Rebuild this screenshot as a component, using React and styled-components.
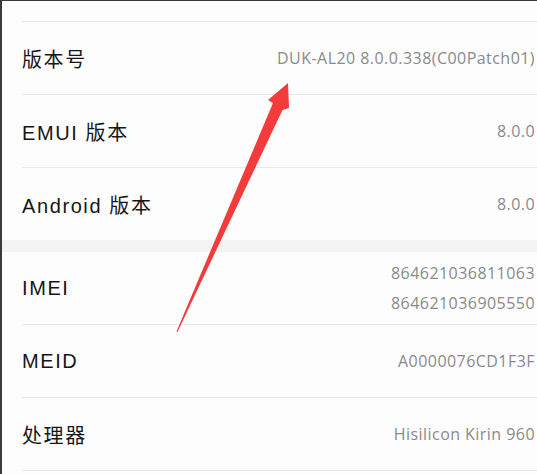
import React from 'react';
import styled, { createGlobalStyle } from 'styled-components';

const GlobalStyle = createGlobalStyle`
  html, body {
    margin: 0;
    padding: 0;
    background: #fdfdfd;
  }
  * {
    box-sizing: border-box;
  }
`;

const groups = [
  [
    { label: '版本号', values: ['DUK-AL20 8.0.0.338(C00Patch01)'] },
    { label: 'EMUI 版本', values: ['8.0.0'] },
    { label: 'Android 版本', values: ['8.0.0'] },
  ],
  [
    { label: 'IMEI', values: ['864621036811063', '864621036905550'] },
    { label: 'MEID', values: ['A0000076CD1F3F'] },
    { label: '处理器', values: ['Hisilicon Kirin 960'], divider: true },
  ],
];

const Screen = styled.div`
  position: relative;
  width: 537px;
  height: 474px;
  overflow: hidden;
  background: #fdfdfd;
  border-top: 1px solid #3a3a3a;
  border-left: 2px solid #3a3a3a;
  font-family: 'Liberation Sans', 'Noto Sans CJK SC', sans-serif;
`;

const TopSpacer = styled.div`
  height: 21px;
  margin-left: 20px;
  border-bottom: 1px solid #e9e9e9;
`;

const Group = styled.div`
  display: flex;
  flex-direction: column;
`;

const Row = styled.div`
  display: flex;
  align-items: center;
  justify-content: space-between;
  height: ${({ $last }) => ($last ? '72px' : '73px')};
  margin-left: 20px;
  padding-right: 2px;
  border-bottom: ${({ $last }) => ($last ? 'none' : '1px solid #e9e9e9')};
`;

const Label = styled.div`
  font-size: 20px;
  color: #161616;
  letter-spacing: 1.6px;
  white-space: nowrap;
`;

const Values = styled.div`
  display: flex;
  flex-direction: column;
  align-items: flex-end;
  font-family: 'Open Sans', 'Noto Sans CJK SC', sans-serif;
  font-size: 16px;
  line-height: 30px;
  letter-spacing: 0.45px;
  color: #8a8a8a;
  white-space: nowrap;
`;

const Band = styled.div`
  height: 12px;
  background: #f3f3f3;
`;

const Arrow = styled.svg`
  position: absolute;
  left: -2px;
  top: -1px;
  width: 537px;
  height: 474px;
  pointer-events: none;
`;

const App = () => {
  return (
    <Screen>
      <GlobalStyle />
      <TopSpacer />
      {groups.map((group, gi) => (
        <React.Fragment key={gi}>
          {gi > 0 && <Band />}
          <Group>
            {group.map((item, i) => (
              <Row key={item.label} $last={i === group.length - 1 && !item.divider}>
                <Label>{item.label}</Label>
                <Values>
                  {item.values.map((v) => (
                    <span key={v}>{v}</span>
                  ))}
                </Values>
              </Row>
            ))}
          </Group>
        </React.Fragment>
      ))}
      <Arrow viewBox="0 0 537 474">
        <polygon
          points="288,83 289,108 282.5,110 177.5,332 176.5,331.5 273,103 268,100"
          fill="#f43b3b"
        />
      </Arrow>
    </Screen>
  );
};

export default App;
